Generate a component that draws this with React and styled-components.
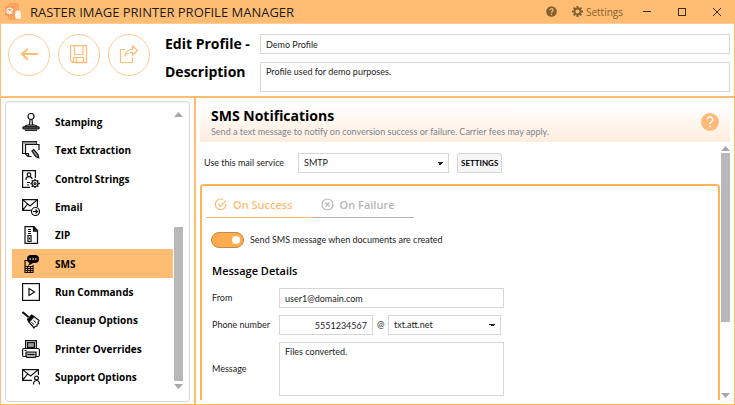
import { useState } from 'react'
import styled, { createGlobalStyle } from 'styled-components'

const colors = {
    accent: '#ffbc73',
    accentDark: '#ffb45c',
    accentSoft: '#ffcb96',
    border: '#d6d6d6',
    scroll: '#b8b8b8',
    brown: '#86602f',
    muted: '#7c8590',
    disabled: '#b5b5b5',
    text: '#1c1c1c',
}

const uiFont = '"Lato", "Open Sans", sans-serif'
const headingFont = '"Open Sans", "Noto Sans", sans-serif'

const menuItems = [
    { label: 'Stamping', Icon: StampIcon },
    { label: 'Text Extraction', Icon: ExtractIcon },
    { label: 'Control Strings', Icon: ControlIcon },
    { label: 'Email', Icon: EmailIcon },
    { label: 'ZIP', Icon: ZipIcon },
    { label: 'SMS', Icon: SmsIcon },
    { label: 'Run Commands', Icon: RunIcon },
    { label: 'Cleanup Options', Icon: BroomIcon },
    { label: 'Printer Overrides', Icon: PrinterIcon },
    { label: 'Support Options', Icon: SupportIcon },
]

export default function App() {
    const [current, setCurrent] = useState('SMS')
    const [tab, setTab] = useState('success')

    return (
        <Window>
            <GlobalStyle />
            <TitleBar>
                <LogoIcon />
                <AppTitle>RASTER IMAGE PRINTER PROFILE MANAGER</AppTitle>
                <BarButton aria-label="Help">
                    <HelpIcon />
                </BarButton>
                <SettingsButton>
                    <GearIcon />
                    Settings
                </SettingsButton>
                <WindowButtons>
                    <BarButton aria-label="Minimize">
                        <MinimizeIcon />
                    </BarButton>
                    <BarButton aria-label="Maximize">
                        <MaximizeIcon />
                    </BarButton>
                    <BarButton aria-label="Close">
                        <CloseIcon />
                    </BarButton>
                </WindowButtons>
            </TitleBar>

            <Header>
                <RoundButtons>
                    <RoundButton aria-label="Back">
                        <BackIcon />
                    </RoundButton>
                    <RoundButton aria-label="Save">
                        <SaveIcon />
                    </RoundButton>
                    <RoundButton aria-label="Export">
                        <ExportIcon />
                    </RoundButton>
                </RoundButtons>
                <ProfileForm>
                    <ProfileLabel htmlFor="profile">Edit Profile -</ProfileLabel>
                    <TextInput id="profile" defaultValue="Demo Profile" />
                    <ProfileLabel htmlFor="description">Description</ProfileLabel>
                    <TextArea id="description" defaultValue="Profile used for demo purposes." />
                </ProfileForm>
            </Header>

            <Body>
                <Sidebar>
                    <Menu>
                        {menuItems.map(({ label, Icon }) => (
                            <MenuItem
                                key={label}
                                $active={label === current}
                                aria-current={label === current}
                                onClick={() => setCurrent(label)}
                            >
                                <Icon />
                                {label}
                            </MenuItem>
                        ))}
                    </Menu>
                    <ScrollBar>
                        <Arrow />
                        <Track $before={111} $thumb={155} $after={3}>
                            <Thumb />
                        </Track>
                        <Arrow $down />
                    </ScrollBar>
                </Sidebar>

                <Content>
                    <Banner>
                        <div>
                            <PageTitle>SMS Notifications</PageTitle>
                            <PageHint>
                                Send a text message to notify on conversion success or failure. Carrier fees may apply.
                            </PageHint>
                        </div>
                        <BannerHelp aria-label="Help on SMS notifications">
                            <BannerHelpIcon />
                        </BannerHelp>
                    </Banner>
                    <ScrollArea>
                        <Page>
                            <ServiceRow>
                                <label htmlFor="service">Use this mail service</label>
                                <Select id="service">
                                    <option>SMTP</option>
                                </Select>
                                <PlainButton>SETTINGS</PlainButton>
                            </ServiceRow>
                            <Group>
                                <Tabs role="tablist">
                                    <Tab
                                        role="tab"
                                        aria-selected={tab === 'success'}
                                        $active={tab === 'success'}
                                        onClick={() => setTab('success')}
                                    >
                                        <SuccessIcon />
                                        On Success
                                    </Tab>
                                    <Tab
                                        role="tab"
                                        aria-selected={tab === 'failure'}
                                        $active={tab === 'failure'}
                                        onClick={() => setTab('failure')}
                                    >
                                        <FailureIcon />
                                        On Failure
                                    </Tab>
                                </Tabs>
                                <ToggleRow>
                                    <Toggle type="checkbox" role="switch" defaultChecked />
                                    Send SMS message when documents are created
                                </ToggleRow>
                                <SectionTitle>Message Details</SectionTitle>
                                <DetailsForm>
                                    <label htmlFor="from">From</label>
                                    <TextInput id="from" defaultValue="user1@domain.com" />
                                    <label htmlFor="phone">Phone number</label>
                                    <PhoneFields>
                                        <PhoneInput id="phone" defaultValue="5551234567" />
                                        <span>@</span>
                                        <Select aria-label="Carrier">
                                            <option>txt.att.net</option>
                                        </Select>
                                    </PhoneFields>
                                    <label htmlFor="message">Message</label>
                                    <MessageArea id="message" defaultValue="Files converted." />
                                </DetailsForm>
                            </Group>
                        </Page>
                        <ScrollBar>
                            <Arrow />
                            <Track $before={2} $thumb={168} $after={70}>
                                <Thumb />
                            </Track>
                            <Arrow $down />
                        </ScrollBar>
                    </ScrollArea>
                </Content>
            </Body>
        </Window>
    )
}

function LogoIcon() {
    return (
        <svg width="18" height="18" viewBox="0 0 18 18" fill="none">
            <rect x="3" y="0" width="11" height="17" rx="2" fill="#ffa45c" />
            <rect x="0" y="3" width="9" height="10" rx="2" fill="#ff9a5a" />
            <path d="M6.500 5.800A2.800 2.800 0 1 0 7.200 9" stroke="#fff" strokeWidth="1.200" />
            <path d="M3 7.500L4.800 9.500 8 6" stroke="#fff" strokeWidth="1.200" />
            <path d="M10 14v-3.500a3 3 0 0 1 6 0V14a2 2 0 0 1-2 2h-2a2 2 0 0 1-2-2z" fill="#fff3e8" />
        </svg>
    )
}

function HelpIcon() {
    return (
        <svg width="11" height="11" viewBox="0 0 11 11" fill="none">
            <circle cx="5.500" cy="5.500" r="5.300" fill={colors.brown} />
            <path d="M4 4.300a1.500 1.500 0 1 1 2.300 1.200c-.6.4-.8.600-.8 1.200M5.500 7.800v1.100" stroke={colors.accent} strokeWidth="1.200" />
        </svg>
    )
}

function GearIcon() {
    return (
        <svg width="11" height="11" viewBox="0 0 22 22" fill="none" stroke={colors.brown}>
            <circle cx="11" cy="11" r="6" strokeWidth="4" />
            <path d="M11 0v4M11 18v4M0 11h4M18 11h4M3.200 3.200l3 3M15.800 15.800l3 3M3.200 18.800l3-3M15.800 6.200l3-3" strokeWidth="4" />
        </svg>
    )
}

function MinimizeIcon() {
    return (
        <svg width="8" height="8" viewBox="0 0 8 8" stroke="#3b2c19">
            <path d="M0 3.500h8" />
        </svg>
    )
}

function MaximizeIcon() {
    return (
        <svg width="8" height="8" viewBox="0 0 8 8" fill="none" stroke="#3b2c19">
            <rect x="0.500" y="0.500" width="7" height="7" />
        </svg>
    )
}

function CloseIcon() {
    return (
        <svg width="8" height="8" viewBox="0 0 8 8" fill="none" stroke="#3b2c19">
            <path d="M0 0l8 8M8 0L0 8" />
        </svg>
    )
}

function BackIcon() {
    return (
        <svg width="18" height="14" viewBox="0 0 18 14" fill="none" stroke={colors.accent} strokeWidth="2">
            <path d="M18 6H2M8 .8L2 6l6 5.800" />
        </svg>
    )
}

function SaveIcon() {
    return (
        <svg width="18" height="20" viewBox="0 0 18 20" fill="none" stroke={colors.accent}>
            <path d="M.5.500h16v17H3L.5 15.500z" strokeWidth="1.300" />
            <path d="M4.500.5v9h8.500v-9M3.500 17.500v-5h10v5M6.500 13v4" strokeWidth="1.200" />
        </svg>
    )
}

function ExportIcon() {
    return (
        <svg width="20" height="20" viewBox="0 0 20 20" fill="none" stroke={colors.accent} strokeWidth="1.200">
            <path d="M6 4.500H1.500v13h12V12" />
            <path d="M6 11c.5-4.500 3-6.500 7.500-6.500V.8l5 4.700-5 4.700V7.500c-3 0-5.500.8-7.500 3.500z" strokeLinejoin="round" />
        </svg>
    )
}

function StampIcon() {
    return (
        <MenuSvg viewBox="0 0 18 18">
            <circle cx="9" cy="3.500" r="3" />
            <path d="M8 6.500L7.500 12M10 6.500l.5 5.500" />
            <path d="M3 14c0-1.500 1-2 3-2h6c2 0 3 .5 3 2z" fill="#bbb" />
            <rect x="0.800" y="13.800" width="16.400" height="2" rx="1" fill="#777" />
            <path d="M3 17.300h12" />
        </MenuSvg>
    )
}

function ExtractIcon() {
    return (
        <MenuSvg viewBox="0 0 18 18">
            <path d="M3 12.500H.6V.7h13.800V3" />
            <path d="M.6 1.800h13.800" stroke="#888" strokeWidth="2" />
            <path d="M9.500 15.500H6L3.500 13V3.500H17V9" />
            <path d="M3.500 12.500h3v3" />
            <path d="M10 10l1.800-1.500 4.200 5 .7 3.200-3-1.200z" fill="#999" />
        </MenuSvg>
    )
}

function ControlIcon() {
    return (
        <MenuSvg viewBox="0 0 18 18">
            <path d="M8 17.400H.6V.6h12.800V8" />
            <circle cx="7" cy="4.700" r="1.800" />
            <path d="M4 10V9c0-1.600 1-2.300 3-2.300s3 .7 3 2.300" />
            <path d="M5 12.500h3M5 15h2" />
            <circle cx="13" cy="13.500" r="3" />
            <circle cx="13" cy="13.500" r="1" />
            <path d="M13 9v1.500M13 16.500V18M8.500 13.500H10M16 13.500h2M9.800 10.300l1 1M15.200 15.700l1 1M9.800 16.700l1-1M15.200 11.300l1-1" strokeWidth="1.500" />
        </MenuSvg>
    )
}

function EmailIcon() {
    return (
        <MenuSvg viewBox="0 0 18 18">
            <path d="M9 12.400H.6V1.600h14.800V9M.6 1.600L8 8l7.400-6.400M.6 12.400L5.500 6" />
            <circle cx="13.500" cy="13.500" r="4" fill="#fff" />
            <path d="M11 13.500h4.500M13.500 11.500l2 2-2 2" />
        </MenuSvg>
    )
}

function ZipIcon() {
    return (
        <MenuSvg viewBox="0 0 18 18">
            <path d="M3 .6h9l3.500 4v12.800H3z" />
            <path d="M11.500.6v4.500h4" fill="#222" />
            <path d="M7.500 3v6" strokeWidth="3" strokeDasharray="1 1" />
            <path d="M6 9.500h3v6H6z" />
            <path d="M7.500 11.500v2" />
        </MenuSvg>
    )
}

function SmsIcon() {
    return (
        <MenuSvg viewBox="0 0 18 18">
            <path d="M5.500 5.500H3v12h8V10" />
            <path d="M3 11.500h8M3 13.500h8M3 15.500h8M5.500 11v6M8.500 11v6" />
            <rect x="5" y="0" width="12" height="8" rx="4" fill="#000" stroke="none" />
            <path d="M8 7L6 11l6-3.500z" fill="#000" stroke="none" />
            <path d="M7.500 4H9M10.300 4h1.500M13 4h1.500" stroke={colors.accent} strokeWidth="1.400" />
        </MenuSvg>
    )
}

function RunIcon() {
    return (
        <MenuSvg viewBox="0 0 18 18">
            <rect x="0.600" y="0.600" width="16.800" height="16.800" />
            <path d="M7 5.500v7l5.500-3.500z" />
        </MenuSvg>
    )
}

function BroomIcon() {
    return (
        <MenuSvg viewBox="0 0 18 18">
            <path d="M.5 1l6 5" strokeWidth="2" />
            <path d="M5.500 8.500l4-4.500 2.500 1.500L7 11z" fill="#000" />
            <path d="M7 11l5-5.500 5 4-1 2 .5 1-1.500 1v1.500l-2 .5-1 1.500z" fill="#fff" />
            <path d="M9.500 11.500l2.500 2M11.500 9.500l2.500 2" strokeWidth="1" />
        </MenuSvg>
    )
}

function PrinterIcon() {
    return (
        <MenuSvg viewBox="0 0 18 18">
            <path d="M3.600 8.500V.6h10.800v7.900" />
            <rect x="5.500" y="2.500" width="7" height="5" fill="#999" />
            <rect x="0.600" y="8.500" width="16.800" height="8" rx="1.500" />
            <path d="M4 12h10v4.500l-1 1H5l-1-1z" fill="#aaa" />
            <path d="M2.500 10.500h2M5.500 14.500h7" />
        </MenuSvg>
    )
}

function SupportIcon() {
    return (
        <MenuSvg viewBox="0 0 18 18">
            <path d="M10 12.400H.6V1.600h15.800V7M.6 1.600L8.500 8l7.900-6.400M.6 12.400L5.500 6" />
            <circle cx="14.500" cy="10" r="1.900" fill="#fff" />
            <path d="M11.500 16.500c0-3 1-4 3-4s3 1 3 4" />
        </MenuSvg>
    )
}

function BannerHelpIcon() {
    return (
        <svg width="18" height="18" viewBox="0 0 18 18" fill="none">
            <circle cx="9" cy="9" r="9" fill="#ffb978" />
            <path d="M6.300 6.300a2.700 2.700 0 1 1 4.300 2.400C9.400 9.600 9 10 9 11.200M9 12.800v1.500" stroke="#fff" strokeWidth="1.500" />
        </svg>
    )
}

function SuccessIcon() {
    return (
        <svg width="13" height="13" viewBox="0 0 13 13" fill="none" stroke="currentColor" strokeWidth="1.200">
            <path d="M9 1.600a5.300 5.300 0 1 0 2.900 4.200M4 6l2.500 2.500L12 2.300" />
        </svg>
    )
}

function FailureIcon() {
    return (
        <svg width="13" height="13" viewBox="0 0 13 13" fill="none" stroke="currentColor" strokeWidth="1.200">
            <circle cx="6.500" cy="6.500" r="5.500" />
            <path d="M4.500 4.500l4 4M8.500 4.500l-4 4" />
        </svg>
    )
}

const GlobalStyle = createGlobalStyle`
    * {
        box-sizing: border-box;
    }
    body {
        margin: 0;
        font-family: ${uiFont};
        font-size: 9px;
        line-height: 12px;
        color: ${colors.text};
        background: #fff;
    }
    button,
    input,
    select,
    textarea {
        margin: 0;
        font: inherit;
        color: inherit;
    }
    button {
        padding: 0;
        border: 0;
        background: none;
        cursor: pointer;
    }
    svg {
        display: block;
        flex: none;
    }
`
const Window = styled.div`
    display: flex;
    flex-direction: column;
    height: 100vh;
    border: 1px solid ${colors.accent};
    border-top: 0;
`
const TitleBar = styled.header`
    display: flex;
    align-items: center;
    flex: none;
    height: 24px;
    padding: 0 13px 0 4px;
    background: ${colors.accent};
    border-bottom: 1px solid ${colors.accentSoft};
`
const AppTitle = styled.h1`
    flex: 1;
    margin: 0;
    padding-left: 7px;
    font-family: ${headingFont};
    font-size: 13px;
    font-weight: normal;
    line-height: 24px;
`
const BarButton = styled.button`
    display: flex;
    align-items: center;
    justify-content: center;
`
const SettingsButton = styled(BarButton)`
    gap: 3px;
    margin-left: 15px;
    font-family: ${headingFont};
    font-size: 10px;
    color: ${colors.brown};
`
const WindowButtons = styled.div`
    display: flex;
    gap: 27px;
    margin-left: 20px;
`
const Header = styled.section`
    display: flex;
    flex: none;
    padding: 10px 4px 4px 7px;
    border-bottom: 2px solid ${colors.accent};
`
const RoundButtons = styled.div`
    display: flex;
    gap: 8px;
    flex: none;
`
const RoundButton = styled.button`
    display: flex;
    align-items: center;
    justify-content: center;
    width: 42px;
    height: 42px;
    border: 1px solid ${colors.accentSoft};
    border-radius: 50%;
`
const ProfileForm = styled.form`
    display: grid;
    grid-template-columns: 88px 1fr;
    gap: 8px 7px;
    flex: 1;
    margin-left: 15px;
`
const ProfileLabel = styled.label`
    font-family: ${headingFont};
    font-size: 14px;
    font-weight: bold;
    line-height: 20px;
    color: #000;
`
const TextInput = styled.input`
    width: 100%;
    min-width: 0;
    height: 20px;
    padding: 0 5px;
    border: 1px solid ${colors.border};
    background: #fff;
`
const TextArea = styled.textarea`
    display: block;
    width: 100%;
    height: 30px;
    padding: 3px 5px;
    border: 1px solid ${colors.border};
    resize: none;
`
const Body = styled.div`
    display: flex;
    flex: 1;
    min-height: 0;
`
const Sidebar = styled.nav`
    display: flex;
    flex: none;
    width: 185px;
    margin: 3px 4px 2px;
    padding: 6px 6px 10px;
    border: 1px solid ${colors.border};
    border-radius: 4px;
`
const Menu = styled.div`
    display: grid;
    grid-auto-rows: 1fr;
    flex: 1;
`
const MenuItem = styled.button`
    display: flex;
    align-items: center;
    gap: 15px;
    padding-left: 10px;
    font-family: ${headingFont};
    font-size: 10px;
    font-weight: bold;
    color: #000;
    background: ${(props) => (props.$active ? colors.accent : 'transparent')};
`
const MenuSvg = styled.svg`
    width: 18px;
    height: 18px;
    fill: none;
    stroke: #111;
    stroke-width: 1.2;
`
const ScrollBar = styled.div`
    display: flex;
    flex-direction: column;
    flex: none;
    width: 9px;
    margin: 4px 0 2px 1px;
`
const Arrow = styled.span`
    height: 5px;
    background: #a8a8a8;
    clip-path: ${(props) => (props.$down ? 'polygon(0 0, 100% 0, 50% 100%)' : 'polygon(50% 0, 100% 100%, 0 100%)')};
`
const Track = styled.div`
    display: grid;
    grid-template-rows: ${(props) => `${props.$before}fr ${props.$thumb}fr ${props.$after}fr`};
    flex: 1;
`
const Thumb = styled.span`
    grid-row: 2;
    background: ${colors.scroll};
`
const Content = styled.main`
    display: flex;
    flex-direction: column;
    flex: 1;
    min-width: 0;
    padding: 0 4px;
    border-left: 2px solid ${colors.accent};
`
const Banner = styled.div`
    display: flex;
    align-items: center;
    justify-content: space-between;
    flex: none;
    padding: 8px 11px 4px;
    background: linear-gradient(#fff 15%, #ffeddd);
`
const PageTitle = styled.h2`
    margin: 0;
    font-family: ${headingFont};
    font-size: 14px;
    line-height: 20px;
    color: #000;
`
const PageHint = styled.p`
    margin: 0;
    color: ${colors.muted};
`
const BannerHelp = styled.button`
    border-radius: 50%;
`
const ScrollArea = styled.div`
    display: flex;
    flex: 1;
    min-height: 0;
    margin-bottom: 4px;
`
const Page = styled.div`
    flex: 1;
    min-width: 0;
    padding-top: 11px;
    overflow: hidden;
`
const ServiceRow = styled.div`
    display: grid;
    grid-template-columns: 86px 151px auto;
    gap: 8px;
    align-items: center;
    justify-content: start;
    padding-left: 4px;
`
const Select = styled.select`
    width: 100%;
    height: 20px;
    padding: 0 5px;
    border: 1px solid ${colors.border};
    border-radius: 0;
    appearance: none;
    background:
        linear-gradient(to bottom right, ${colors.text} 50%, transparent 50%) right 5px center / 3px 3px no-repeat,
        linear-gradient(to bottom left, ${colors.text} 50%, transparent 50%) right 8px center / 3px 3px no-repeat,
        #fff;
`
const PlainButton = styled.button`
    height: 20px;
    padding: 0 3px;
    border: 1px solid ${colors.border};
    border-radius: 2px;
    background: #f6f6f6;
    font-size: 8px;
    font-weight: bold;
    color: #000;
`
const Group = styled.section`
    min-height: 260px;
    margin-top: 11px;
    padding: 9px 4px;
    border: 2px solid ${colors.accentDark};
    border-radius: 4px;
`
const Tabs = styled.div`
    display: flex;
`
const Tab = styled.button`
    display: flex;
    align-items: center;
    gap: 6px;
    height: 23px;
    padding: 0 20px 3px 8px;
    border-bottom: 1px solid;
    font-family: ${headingFont};
    font-size: 11px;
    font-weight: 600;
    color: ${(props) => (props.$active ? colors.accent : colors.disabled)};
`
const ToggleRow = styled.label`
    display: flex;
    align-items: center;
    gap: 6px;
    margin: 14px 0 0 5px;
`
const Toggle = styled.input`
    display: flex;
    align-items: center;
    width: 33px;
    height: 16px;
    margin: 0;
    padding: 0 3px;
    border: 1px solid #c08a4c;
    border-radius: 8px;
    appearance: none;
    background: #eee;
    &::before {
        content: '';
        width: 8px;
        height: 8px;
        border-radius: 50%;
        background: #fff;
    }
    &:checked {
        justify-content: flex-end;
        background: #ffab4f;
    }
`
const SectionTitle = styled.h3`
    margin: 15px 0 9px 6px;
    font-family: ${headingFont};
    font-size: 11px;
    font-weight: 600;
    line-height: 16px;
    color: #000;
`
const DetailsForm = styled.form`
    display: grid;
    grid-template-columns: 58px 225px;
    gap: 7px 9px;
    align-items: center;
    margin-left: 6px;
    white-space: nowrap;
`
const PhoneFields = styled.div`
    display: grid;
    grid-template-columns: 94px 7px 113px;
    gap: 4px;
    align-items: center;
`
const PhoneInput = styled(TextInput)`
    text-align: right;
`
const MessageArea = styled(TextArea)`
    height: 54px;
`
